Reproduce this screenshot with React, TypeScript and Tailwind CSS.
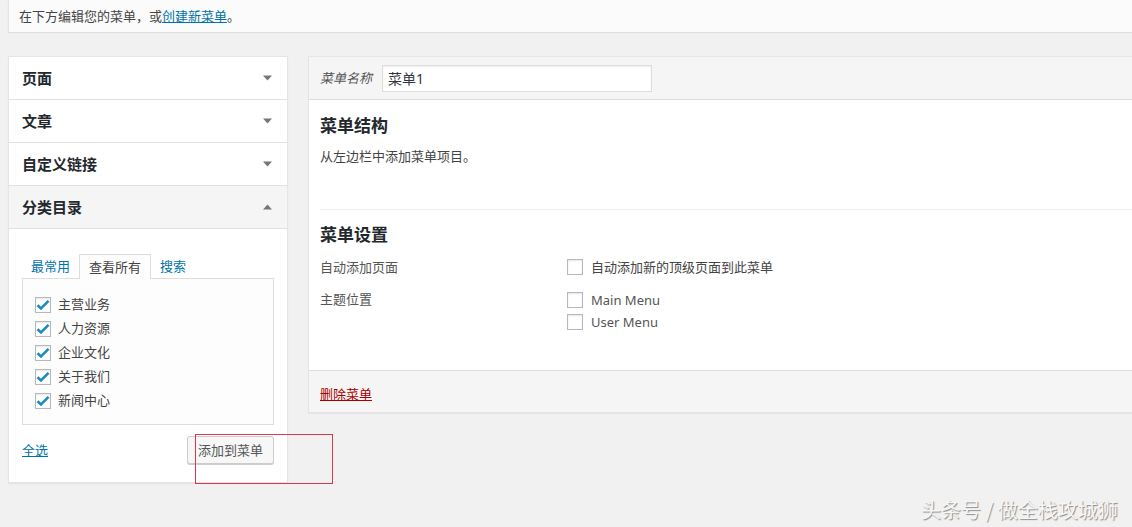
import React from "react";

const Arrow = ({ up }: { up?: boolean }) => (
  <svg width="9" height="6" viewBox="0 0 9 6" className="text-[#72777c]">
    {up ? (
      <polygon points="0,5.5 9,5.5 4.5,0.5" fill="currentColor" />
    ) : (
      <polygon points="0,0.5 9,0.5 4.5,5.5" fill="currentColor" />
    )}
  </svg>
);

const Checkbox = ({ checked }: { checked?: boolean }) => (
  <span className="w-[16px] h-[16px] shrink-0 border border-[#b4b9be] bg-white shadow-[inset_0_1px_2px_rgba(0,0,0,0.1)] flex items-center justify-center">
    {checked && (
      <svg width="14" height="12" viewBox="0 0 14 12">
        <path d="M1.5 6.2 L5 9.5 L12.5 1.8" fill="none" stroke="#1e8cbe" strokeWidth="2.6" />
      </svg>
    )}
  </span>
);

const sections = [
  { title: "页面", open: false },
  { title: "文章", open: false },
  { title: "自定义链接", open: false },
  { title: "分类目录", open: true },
];

const categories = ["主营业务", "人力资源", "企业文化", "关于我们", "新闻中心"];

export default function App() {
  return (
    <div className="relative w-[1132px] h-[527px] overflow-hidden bg-[#f1f1f1] text-[#444] font-['Noto_Sans','Noto_Sans_CJK_SC',sans-serif]">
      {/* notice */}
      <div className="ml-[8px] h-[32px] bg-[#fbfbfb] border-l border-[#e5e5e5] shadow-[0_1px_1px_rgba(0,0,0,0.08)] pl-[10px] flex items-center text-[13px] leading-[20px] text-[#444]">
        在下方编辑您的菜单，或<span className="text-[#0073aa] underline">创建新菜单</span>。
      </div>

      <div className="flex items-start gap-[20px] ml-[8px] mt-[24px]">
        {/* left accordion */}
        <div className="w-[280px] shrink-0 bg-white border border-[#e5e5e5] shadow-[0_1px_1px_rgba(0,0,0,0.05)]">
          {sections.map((s) => (
            <div
              key={s.title}
              className={
                "h-[43px] border-b border-[#e1e1e1] pl-[13px] pr-[15px] flex items-center justify-between " +
                (s.open ? "bg-[#f5f5f5]" : "bg-white")
              }
            >
              <span className="text-[15px] font-bold text-[#23282d] leading-[20px]">{s.title}</span>
              <Arrow up={s.open} />
            </div>
          ))}

          <div className="px-[13px] pt-[24px] pb-[18px]">
            <div className="flex text-[13px] leading-[20px]">
              <span className="h-[25px] px-[9px] flex items-center text-[#0073aa]">最常用</span>
              <span className="h-[25px] px-[9px] flex items-center text-[#444] border border-b-0 border-[#dddddd] bg-[#fdfdfd] relative top-[1px]">
                查看所有
              </span>
              <span className="h-[25px] px-[9px] flex items-center text-[#0073aa]">搜索</span>
            </div>
            <div className="h-[147px] border border-[#dddddd] bg-[#fdfdfd] pl-[12px] pt-[14px] flex flex-col">
              {categories.map((c) => (
                <div key={c} className="h-[24px] flex items-center gap-[7px] text-[13px] text-[#444]">
                  <Checkbox checked />
                  <span>{c}</span>
                </div>
              ))}
            </div>
            <div className="mt-[11px] flex items-center justify-between">
              <span className="text-[13px] text-[#0073aa] underline leading-[20px]">全选</span>
              <button className="h-[28px] px-[10px] bg-[#f7f7f7] border border-[#cccccc] rounded-[3px] shadow-[0_1px_0_#cccccc] text-[13px] text-[#555] leading-[20px]">
                添加到菜单
              </button>
            </div>
          </div>
        </div>

        {/* right editor */}
        <div className="w-[840px] shrink-0 bg-white border border-[#e5e5e5] shadow-[0_1px_1px_rgba(0,0,0,0.05)]">
          <div className="h-[43px] bg-[#f5f5f5] border-b border-[#dddddd] pl-[11px] flex items-center gap-[10px]">
            <span className="text-[13px] italic text-[#555] leading-[20px]">菜单名称</span>
            <div className="w-[270px] h-[27px] bg-white border border-[#dddddd] shadow-[inset_0_1px_2px_rgba(0,0,0,0.07)] px-[5px] flex items-center text-[14px] text-[#32373c]">
              菜单1
            </div>
          </div>

          <div className="pl-[11px] pt-[14px]">
            <h3 className="text-[17px] font-bold text-[#23282d] leading-[24px]">菜单结构</h3>
            <p className="mt-[8px] text-[13px] leading-[20px] text-[#444]">从左边栏中添加菜单项目。</p>
            <div className="mt-[43px] border-t border-[#eeeeee]" />
            <h3 className="mt-[13px] text-[17px] font-bold text-[#23282d] leading-[24px]">菜单设置</h3>

            <div className="mt-[10px] flex text-[13px] leading-[20px]">
              <div className="w-[247px] text-[#555]">自动添加页面</div>
              <div className="flex items-center gap-[8px] text-[#444]">
                <Checkbox />
                <span>自动添加新的顶级页面到此菜单</span>
              </div>
            </div>
            <div className="mt-[12px] flex text-[13px] leading-[20px] pb-[37px]">
              <div className="w-[247px] text-[#555]">主题位置</div>
              <div className="flex flex-col">
                <div className="h-[22px] flex items-center gap-[8px] text-[#555]">
                  <Checkbox />
                  <span>Main Menu</span>
                </div>
                <div className="h-[22px] flex items-center gap-[8px] text-[#555]">
                  <Checkbox />
                  <span>User Menu</span>
                </div>
              </div>
            </div>
          </div>

          <div className="h-[42px] bg-[#f5f5f5] border-t border-[#dddddd] pl-[11px] pt-[4px] flex items-center">
            <span className="text-[13px] text-[#a00] underline leading-[20px]">删除菜单</span>
          </div>
        </div>
      </div>

      {/* annotation box */}
      <div className="absolute left-[195px] top-[434px] w-[138px] h-[50px] border border-[#d9384f]" />

      {/* watermark */}
      <div className="absolute left-[921px] top-[497px] text-[20px] leading-[26px] text-[#f6f6f6] [text-shadow:1px_1px_1px_#8a8a8a] font-['Noto_Sans_CJK_SC',sans-serif]">
        头条号 / 做全栈攻城狮
      </div>
    </div>
  );
}
